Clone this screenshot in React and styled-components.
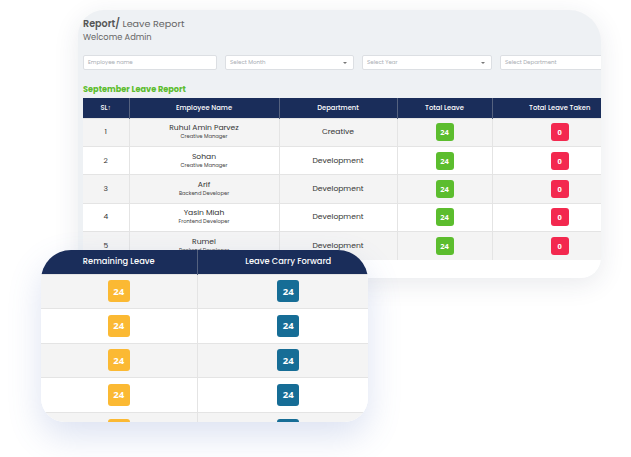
import React from "react";
import styled, { createGlobalStyle } from "styled-components";

const Global = createGlobalStyle`
  html, body { margin: 0; padding: 0; background: #ffffff; }
  body { font-family: "Poppins", "Open Sans", "Noto Sans", sans-serif; color: #333; }
  * { box-sizing: border-box; }
`;

const Stage = styled.div`
  position: relative;
  width: 631px;
  height: 457px;
  overflow: hidden;
  padding: 10px 0 0 78px;
`;

const Panel = styled.div`
  width: 523px;
  height: 268px;
  background: #eef1f4;
  border-radius: 26px 32px 20px 0;
  overflow: hidden;
  display: flex;
  flex-direction: column;
  padding: 8px 0 0 5px;
  box-shadow: 0 6px 26px rgba(40, 50, 80, 0.10);
`;

const Crumb = styled.div`
  font-size: 9.6px;
  line-height: 12px;
  color: #666;
  b { font-weight: 600; color: #555; }
`;

const Welcome = styled.div`
  font-size: 8.3px;
  line-height: 11px;
  color: #666;
  margin-top: 2px;
`;

const Filters = styled.div`
  display: flex;
  gap: 8px;
  margin-top: 12px;
`;

const Field = styled.div`
  flex: 0 0 ${(p) => p.$w}px;
  height: 15px;
  background: #fff;
  border: 1px solid #dcdfe3;
  border-radius: 2px;
  display: flex;
  align-items: center;
  justify-content: space-between;
  padding: 0 6px 0 4px;
  font-size: 5.5px;
  color: #a9adb3;
`;

const Caret = styled.span`
  width: 0;
  height: 0;
  border-left: 2.5px solid transparent;
  border-right: 2.5px solid transparent;
  border-top: 2.5px solid #777;
`;

const SectionTitle = styled.div`
  margin-top: 14px;
  font-size: 8.2px;
  line-height: 11px;
  font-weight: 700;
  color: #5cbd2e;
`;

const TableWrap = styled.div`
  margin-top: 3px;
  flex: 1;
  background: #fff;
  width: 544px;
`;

const Table = styled.table`
  border-collapse: collapse;
  table-layout: fixed;
  width: ${(p) => p.$w}px;
`;

const Th = styled.th`
  background: #1a2d5a;
  color: #fff;
  font-weight: 500;
  font-size: ${(p) => p.$fs}px;
  height: ${(p) => p.$h}px;
  padding: 0;
  text-align: center;
  border-left: 1px solid #55627f;
  &:first-child { border-left: none; }
`;

const Tr = styled.tr`
  background: ${(p) => (p.$alt ? "#ffffff" : "#f4f4f4")};
`;

const Td = styled.td`
  height: ${(p) => p.$h}px;
  padding: 0;
  text-align: center;
  vertical-align: middle;
  border-top: 1px solid #e4e4e4;
  border-left: 1px solid #e4e4e4;
  font-size: ${(p) => p.$fs || 8}px;
  color: #333;
  &:first-child { border-left: none; }
`;

const Name = styled.div`
  font-size: 7.6px;
  line-height: 10px;
  color: #333;
`;

const Role = styled.div`
  font-size: 5.2px;
  line-height: 8px;
  color: #444;
`;

const Badge = styled.span`
  display: inline-flex;
  align-items: center;
  justify-content: center;
  width: ${(p) => p.$s}px;
  height: ${(p) => p.$s}px;
  border-radius: 3px;
  background: ${(p) => p.$bg};
  color: #fff;
  font-weight: 700;
  font-size: ${(p) => p.$fs}px;
  font-family: "Open Sans", sans-serif;
`;

const Card = styled.div`
  position: absolute;
  left: 41px;
  top: 250px;
  width: 327px;
  height: 172px;
  border-radius: 30px 30px 24px 24px;
  overflow: hidden;
  background: #fff;
  box-shadow: 0 14px 34px rgba(80, 110, 190, 0.20);
`;

const rows = [
  { n: "Ruhul Amin Parvez", r: "Creative Manager", d: "Creative" },
  { n: "Sohan", r: "Creative Manager", d: "Development" },
  { n: "Arif", r: "Backend Developer", d: "Development" },
  { n: "Yasin Miah", r: "Frontend Developer", d: "Development" },
  { n: "Rumel", r: "Backend Developer", d: "Development" },
];

export default function App() {
  return (
    <>
      <Global />
      <Stage>
        <Panel>
          <Crumb>
            <b>Report/</b> Leave Report
          </Crumb>
          <Welcome>Welcome Admin</Welcome>
          <Filters>
            <Field $w={134}>Employee name</Field>
            <Field $w={129}>
              Select Month <Caret />
            </Field>
            <Field $w={130}>
              Select Year <Caret />
            </Field>
            <Field $w={134}>Select Department</Field>
          </Filters>
          <SectionTitle>September Leave Report</SectionTitle>
          <TableWrap>
            <Table $w={544}>
              <colgroup>
                <col style={{ width: 46 }} />
                <col style={{ width: 150 }} />
                <col style={{ width: 118 }} />
                <col style={{ width: 95 }} />
                <col style={{ width: 135 }} />
              </colgroup>
              <thead>
                <tr>
                  <Th $h={20} $fs={6.8}>SL↑</Th>
                  <Th $h={20} $fs={6.8}>Employee Name</Th>
                  <Th $h={20} $fs={6.8}>Department</Th>
                  <Th $h={20} $fs={6.8}>Total Leave</Th>
                  <Th $h={20} $fs={6.8}>Total Leave Taken</Th>
                </tr>
              </thead>
              <tbody>
                {rows.map((r, i) => (
                  <Tr key={i} $alt={i % 2 === 1}>
                    <Td $h={28.4} $fs={7.5}>{i + 1}</Td>
                    <Td $h={28.4}>
                      <Name>{r.n}</Name>
                      <Role>{r.r}</Role>
                    </Td>
                    <Td $h={28.4} $fs={7.6}>{r.d}</Td>
                    <Td $h={28.4}>
                      <Badge $s={18} $bg="#5cbd2e" $fs={7.5}>24</Badge>
                    </Td>
                    <Td $h={28.4}>
                      <Badge $s={18} $bg="#f3284f" $fs={7.5}>0</Badge>
                    </Td>
                  </Tr>
                ))}
              </tbody>
            </Table>
          </TableWrap>
        </Panel>
        <Card>
          <Table $w={338}>
            <colgroup>
              <col style={{ width: 156 }} />
              <col style={{ width: 182 }} />
            </colgroup>
            <thead>
              <tr>
                <Th $h={24} $fs={8.3}>Remaining Leave</Th>
                <Th $h={24} $fs={8.3}>Leave Carry Forward</Th>
              </tr>
            </thead>
            <tbody>
              {[0, 1, 2, 3, 4].map((i) => (
                <Tr key={i} $alt={i % 2 === 1}>
                  <Td $h={34.5}>
                    <Badge $s={22} $bg="#fbb933" $fs={9.5}>24</Badge>
                  </Td>
                  <Td $h={34.5}>
                    <Badge $s={22} $bg="#166d96" $fs={9.5}>24</Badge>
                  </Td>
                </Tr>
              ))}
            </tbody>
          </Table>
        </Card>
      </Stage>
    </>
  );
}
